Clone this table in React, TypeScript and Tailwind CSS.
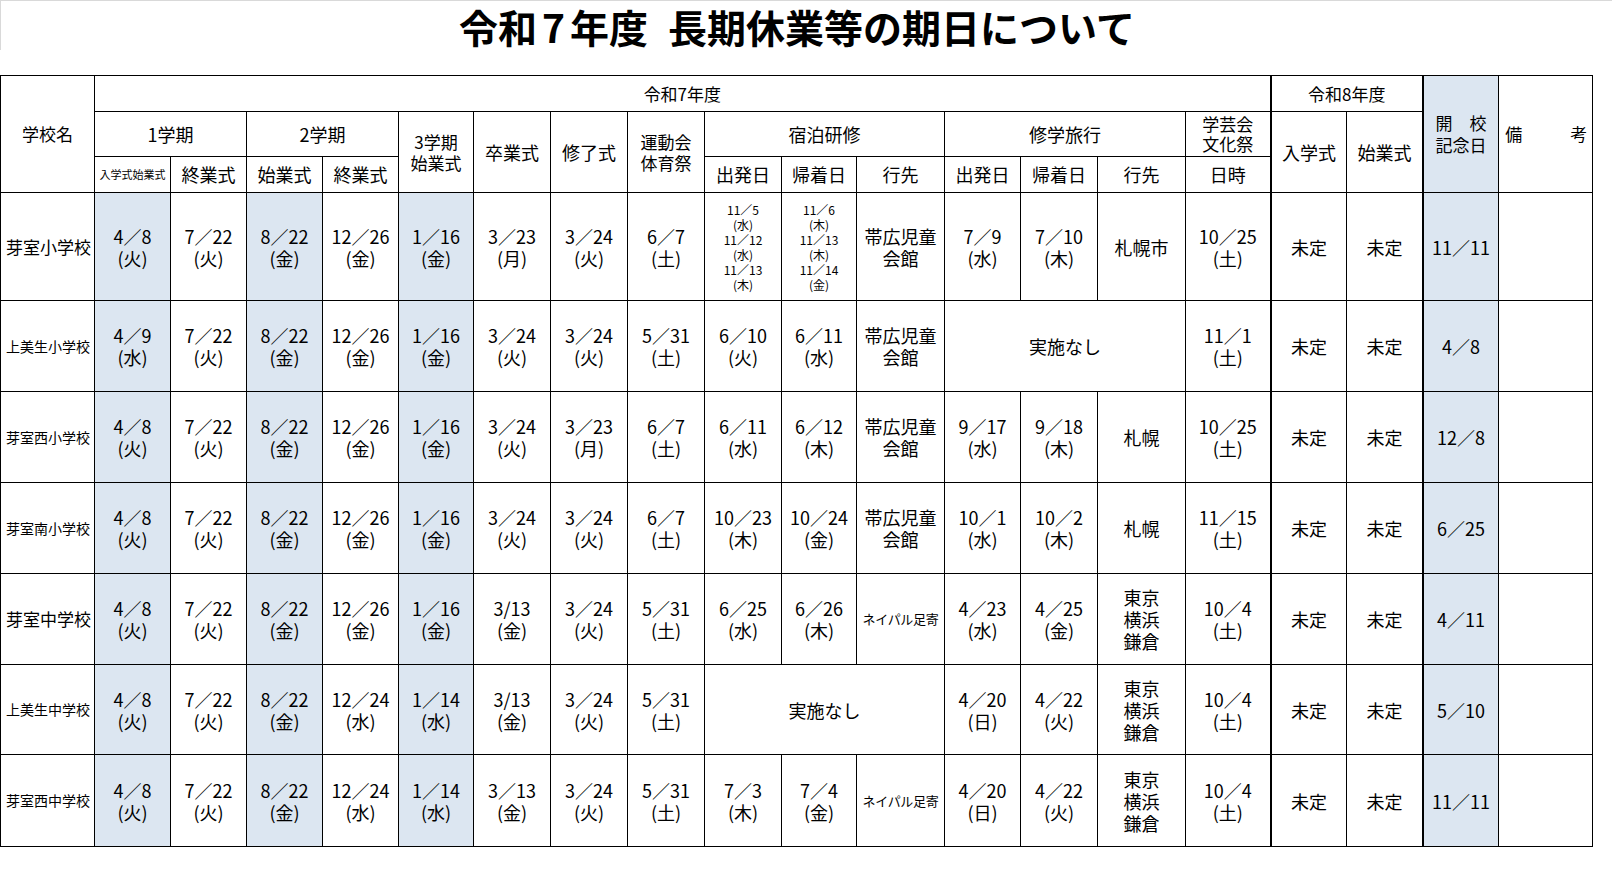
import React from 'react';

type Cell = string | { t: string; span?: number; small?: boolean; tiny?: boolean };

interface SchoolRow {
  name: string;
  nameSize: string;
  h: string;
  cells: Cell[];
}

// date + weekday on two lines
const D = (date: string, wd: string) => `${date}\n(${wd})`;

const colWidths = [94, 76, 76, 76, 76, 75, 77, 77, 77, 77, 75, 88, 76, 77, 88, 85, 76, 76, 76, 94];

// data column indexes (after the school name) with light blue fill / thick left rule
const blueCols = [0, 2, 4, 17];
const thickCols = [15, 17];

const rows: SchoolRow[] = [
  {
    name: '芽室小学校',
    nameSize: 'text-[17px]',
    h: 'h-[108px]',
    cells: [
      D('4／8', '火'), D('7／22', '火'), D('8／22', '金'), D('12／26', '金'), D('1／16', '金'),
      D('3／23', '月'), D('3／24', '火'), D('6／7', '土'),
      { t: '11／5\n(水)\n11／12\n(水)\n11／13\n(木)', small: true },
      { t: '11／6\n(木)\n11／13\n(木)\n11／14\n(金)', small: true },
      '帯広児童\n会館', D('7／9', '水'), D('7／10', '木'), '札幌市', D('10／25', '土'),
      '未定', '未定', '11／11', '',
    ],
  },
  {
    name: '上美生小学校',
    nameSize: 'text-[14px]',
    h: 'h-[91px]',
    cells: [
      D('4／9', '水'), D('7／22', '火'), D('8／22', '金'), D('12／26', '金'), D('1／16', '金'),
      D('3／24', '火'), D('3／24', '火'), D('5／31', '土'),
      D('6／10', '火'), D('6／11', '水'), '帯広児童\n会館',
      { t: '実施なし', span: 3 },
      D('11／1', '土'), '未定', '未定', '4／8', '',
    ],
  },
  {
    name: '芽室西小学校',
    nameSize: 'text-[14px]',
    h: 'h-[91px]',
    cells: [
      D('4／8', '火'), D('7／22', '火'), D('8／22', '金'), D('12／26', '金'), D('1／16', '金'),
      D('3／24', '火'), D('3／23', '月'), D('6／7', '土'),
      D('6／11', '水'), D('6／12', '木'), '帯広児童\n会館',
      D('9／17', '水'), D('9／18', '木'), '札幌', D('10／25', '土'),
      '未定', '未定', '12／8', '',
    ],
  },
  {
    name: '芽室南小学校',
    nameSize: 'text-[14px]',
    h: 'h-[91px]',
    cells: [
      D('4／8', '火'), D('7／22', '火'), D('8／22', '金'), D('12／26', '金'), D('1／16', '金'),
      D('3／24', '火'), D('3／24', '火'), D('6／7', '土'),
      D('10／23', '木'), D('10／24', '金'), '帯広児童\n会館',
      D('10／1', '水'), D('10／2', '木'), '札幌', D('11／15', '土'),
      '未定', '未定', '6／25', '',
    ],
  },
  {
    name: '芽室中学校',
    nameSize: 'text-[17px]',
    h: 'h-[91px]',
    cells: [
      D('4／8', '火'), D('7／22', '火'), D('8／22', '金'), D('12／26', '金'), D('1／16', '金'),
      D('3/13', '金'), D('3／24', '火'), D('5／31', '土'),
      D('6／25', '水'), D('6／26', '木'), { t: 'ネイパル足寄', tiny: true },
      D('4／23', '水'), D('4／25', '金'), '東京\n横浜\n鎌倉', D('10／4', '土'),
      '未定', '未定', '4／11', '',
    ],
  },
  {
    name: '上美生中学校',
    nameSize: 'text-[14px]',
    h: 'h-[90px]',
    cells: [
      D('4／8', '火'), D('7／22', '火'), D('8／22', '金'), D('12／24', '水'), D('1／14', '水'),
      D('3/13', '金'), D('3／24', '火'), D('5／31', '土'),
      { t: '実施なし', span: 3 },
      D('4／20', '日'), D('4／22', '火'), '東京\n横浜\n鎌倉', D('10／4', '土'),
      '未定', '未定', '5／10', '',
    ],
  },
  {
    name: '芽室西中学校',
    nameSize: 'text-[14px]',
    h: 'h-[92px]',
    cells: [
      D('4／8', '火'), D('7／22', '火'), D('8／22', '金'), D('12／24', '水'), D('1／14', '水'),
      D('3／13', '金'), D('3／24', '火'), D('5／31', '土'),
      D('7／3', '木'), D('7／4', '金'), { t: 'ネイパル足寄', tiny: true },
      D('4／20', '日'), D('4／22', '火'), '東京\n横浜\n鎌倉', D('10／4', '土'),
      '未定', '未定', '11／11', '',
    ],
  },
];

const th = 'border border-black font-normal p-0 text-center align-middle whitespace-pre-line';

const DataRow = ({ row }: { row: SchoolRow }) => {
  let col = 0;
  return (
    <tr className={row.h}>
      <td className={`border border-black pl-[5px] text-left align-middle whitespace-nowrap ${row.nameSize}`}>
        {row.name}
      </td>
      {row.cells.map((cell, i) => {
        const c = typeof cell === 'string' ? { t: cell } : cell;
        const start = col;
        col += c.span ?? 1;
        const blue = blueCols.includes(start) ? 'bg-[#dce6f1]' : '';
        const thick = thickCols.includes(start) ? 'border-l-2' : '';
        const size = c.small
          ? 'text-[12px] leading-[15px]'
          : c.tiny
          ? 'text-[13px] leading-[16px] tracking-[-0.3px]'
          : 'text-[18px] leading-[22px]';
        return (
          <td
            key={i}
            colSpan={c.span}
            className={`border border-black p-0 text-center align-middle whitespace-pre-line ${size} ${blue} ${thick}`}
          >
            {c.t}
          </td>
        );
      })}
    </tr>
  );
};

export default function App() {
  return (
    <div className="w-[1612px] h-[879px] bg-white text-black font-['Noto_Sans_CJK_JP','Noto_Sans',sans-serif]">
      {/* title strip */}
      <div className="h-[50px] border-t border-l border-[#d9d9d9]">
        <div className="w-[1592px] h-full flex items-center justify-center pt-[2px]">
          <h1 className="text-[39px] leading-none font-bold flex gap-[20px]">
            <span>
              令和<span className="mx-[5px]">7</span>年度
            </span>
            <span>長期休業等の期日について</span>
          </h1>
        </div>
      </div>

      <table className="mt-[25px] border-collapse table-fixed w-[1592px] border border-black">
        <colgroup>
          {colWidths.map((w, i) => (
            <col key={i} style={{ width: w }} />
          ))}
        </colgroup>
        <thead>
          <tr className="h-[36px]">
            <th rowSpan={3} className={`${th} text-[17px]`}>学校名</th>
            <th colSpan={15} className={`${th} text-[17px]`}>令和7年度</th>
            <th colSpan={2} className={`${th} text-[17px] border-l-2`}>令和8年度</th>
            <th rowSpan={3} className={`${th} text-[17px] leading-[22px] bg-[#dce6f1] border-l-2`}>
              {'開　校\n記念日'}
            </th>
            <th rowSpan={3} className={`${th} text-[17px]`}>
              <div className="flex justify-between pl-[6px] pr-[5px]">
                <span>備</span>
                <span>考</span>
              </div>
            </th>
          </tr>
          <tr className="h-[45px]">
            <th colSpan={2} className={`${th} text-[18px]`}>1学期</th>
            <th colSpan={2} className={`${th} text-[18px]`}>2学期</th>
            <th rowSpan={2} className={`${th} text-[17px] leading-[21px]`}>{'3学期\n始業式'}</th>
            <th rowSpan={2} className={`${th} text-[18px]`}>卒業式</th>
            <th rowSpan={2} className={`${th} text-[18px]`}>修了式</th>
            <th rowSpan={2} className={`${th} text-[17px] leading-[21px]`}>{'運動会\n体育祭'}</th>
            <th colSpan={3} className={`${th} text-[18px]`}>宿泊研修</th>
            <th colSpan={3} className={`${th} text-[18px]`}>修学旅行</th>
            <th className={`${th} text-[17px] leading-[20px]`}>{'学芸会\n文化祭'}</th>
            <th rowSpan={2} className={`${th} text-[18px] border-l-2`}>入学式</th>
            <th rowSpan={2} className={`${th} text-[18px]`}>始業式</th>
          </tr>
          <tr className="h-[36px]">
            <th className={`${th} text-[11px] whitespace-nowrap`}>入学式始業式</th>
            <th className={`${th} text-[18px]`}>終業式</th>
            <th className={`${th} text-[18px]`}>始業式</th>
            <th className={`${th} text-[18px]`}>終業式</th>
            <th className={`${th} text-[18px]`}>出発日</th>
            <th className={`${th} text-[18px]`}>帰着日</th>
            <th className={`${th} text-[18px]`}>行先</th>
            <th className={`${th} text-[18px]`}>出発日</th>
            <th className={`${th} text-[18px]`}>帰着日</th>
            <th className={`${th} text-[18px]`}>行先</th>
            <th className={`${th} text-[18px]`}>日時</th>
          </tr>
        </thead>
        <tbody>
          {rows.map((r) => (
            <DataRow key={r.name} row={r} />
          ))}
        </tbody>
      </table>
    </div>
  );
}
